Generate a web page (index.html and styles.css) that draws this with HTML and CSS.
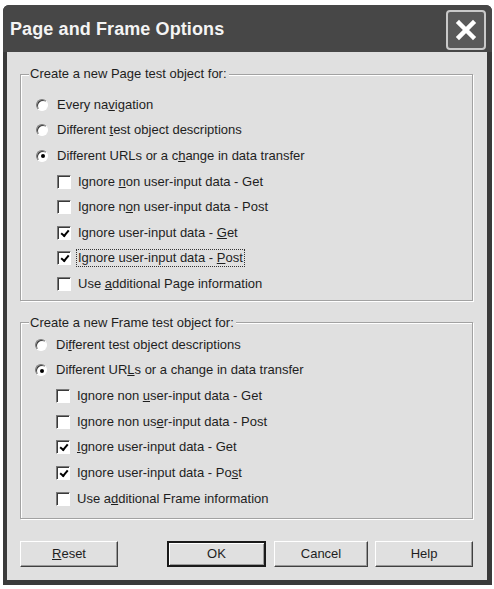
FILE: index.html
```html
<!DOCTYPE html>
<html>
<head>
<meta charset="utf-8">
<link rel="stylesheet" href="styles.css">
</head>
<body>
<div class="window">
  <div class="titlebar">
    <span class="title">Page and Frame Options</span>
    <div class="close">
      <svg width="22" height="22" viewBox="0 0 22 22"><path d="M4 4 L18 18 M18 4 L4 18" stroke="#fff" stroke-width="4.5" stroke-linecap="square"/></svg>
    </div>
  </div>
  <div class="client">
    <fieldset class="group group-page">
      <legend>Create a new Page test object for:</legend>
      <div class="rows">
        <div class="row radio-row"><span class="radio"></span><span class="label">Every na<u>v</u>igation</span></div>
        <div class="row radio-row"><span class="radio"></span><span class="label">Different <u>t</u>est object descriptions</span></div>
        <div class="row radio-row"><span class="radio on"></span><span class="label">Different URLs or a c<u>h</u>ange in data transfer</span></div>
        <div class="row check-row"><span class="check"></span><span class="label">Ignore <u>n</u>on user-input data - Get</span></div>
        <div class="row check-row"><span class="check"></span><span class="label">Ignore n<u>o</u>n user-input data - Post</span></div>
        <div class="row check-row"><span class="check on"></span><span class="label">Ignore user-input data - <u>G</u>et</span></div>
        <div class="row check-row"><span class="check on"></span><span class="label focus">Ignore user-input data - <u>P</u>ost</span></div>
        <div class="row check-row"><span class="check"></span><span class="label">Use <u>a</u>dditional Page information</span></div>
      </div>
    </fieldset>
    <fieldset class="group group-frame">
      <legend>Create a new Frame test object for:</legend>
      <div class="rows">
        <div class="row radio-row"><span class="radio"></span><span class="label">Di<u>f</u>ferent test object descriptions</span></div>
        <div class="row radio-row"><span class="radio on"></span><span class="label">Different UR<u>L</u>s or a change in data transfer</span></div>
        <div class="row check-row"><span class="check"></span><span class="label">Ignore non <u>u</u>ser-input data - Get</span></div>
        <div class="row check-row"><span class="check"></span><span class="label">Ignore non us<u>e</u>r-input data - Post</span></div>
        <div class="row check-row"><span class="check on"></span><span class="label"><u>I</u>gnore user-input data - Get</span></div>
        <div class="row check-row"><span class="check on"></span><span class="label">Ignore user-input data - Po<u>s</u>t</span></div>
        <div class="row check-row"><span class="check"></span><span class="label">Use a<u>d</u>ditional Frame information</span></div>
      </div>
    </fieldset>
    <div class="buttons">
      <div class="btn btn-reset"><u>R</u>eset</div>
      <div class="btn btn-ok">OK</div>
      <div class="btn btn-cancel">Cancel</div>
      <div class="btn btn-help">Help</div>
    </div>
  </div>
</div>
</body>
</html>
```

FILE: styles.css
```css
html, body {
  margin: 0;
  padding: 0;
  background: #ffffff;
}
body {
  font-family: "Liberation Sans", Arial, sans-serif;
  font-size: 13px;
  color: #1e1e1e;
}
.window {
  margin: 5px 0 0 3px;
  width: 489px;
  height: 580px;
  background: #3a3a3a;
  border-radius: 6px 6px 0 0;
  display: flex;
  flex-direction: column;
}
.titlebar {
  height: 47px;
  flex: none;
  display: flex;
  align-items: center;
  justify-content: space-between;
  padding: 0 6px 0 7px;
  background: #474747;
  border-radius: 6px 6px 0 0;
}
.title {
  font-weight: bold;
  font-size: 18px;
  color: #f4f4f4;
  letter-spacing: 0.1px;
  margin-top: 2px;
}
.close {
  width: 36px;
  height: 36px;
  border: 2px solid #c9c9c9;
  border-radius: 4px;
  background: #5a5a5a;
  display: flex;
  align-items: center;
  justify-content: center;
  margin-top: 3px;
}
.client {
  flex: 1;
  margin: 0 5px 5px 4px;
  background: #e0e0e0;
  padding: 14px 13px 0 13px;
}
.group {
  margin: 0;
  padding: 0;
  border: 1px solid #a2a2a2;
  box-shadow: inset 1px 1px 0 #ffffff, 1px 1px 0 #ffffff;
  width: 453px;
  box-sizing: border-box;
}
.group legend {
  margin-left: 8px;
  padding: 0 2px 0 1px;
  line-height: 16px;
  background: #e0e0e0;
}
.group-page .rows {
  padding: 10px 0 3px 0;
}
.group-page .row {
  height: 25.6px;
}
.group-frame {
  margin-top: 14px;
}
.group-frame .rows {
  padding: 1px 0 6px 0;
}
.group-frame .row {
  height: 25.7px;
}
.row {
  display: flex;
  align-items: center;
}
.group-page .radio-row { padding-left: 15px; }
.group-page .check-row { padding-left: 36px; }
.group-frame .radio-row { padding-left: 14px; }
.group-frame .check-row { padding-left: 35px; }
.radio {
  width: 12px;
  height: 12px;
  box-sizing: border-box;
  border-radius: 50%;
  border: 1px solid;
  border-color: #7a7a7a #ffffff #ffffff #7a7a7a;
  box-shadow: inset 1px 1px 0 #3a3a3a;
  background: #ffffff;
  margin-right: 9px;
  display: flex;
  align-items: center;
  justify-content: center;
  flex: none;
}
.radio.on::after {
  content: "";
  width: 4px;
  height: 4px;
  border-radius: 50%;
  background: #000;
  margin: 1px 0 0 1px;
}
.check {
  width: 14px;
  height: 14px;
  box-sizing: border-box;
  border: 1px solid;
  border-color: #7a7a7a #ffffff #ffffff #7a7a7a;
  box-shadow: inset 1px 1px 0 #3a3a3a;
  background: #ffffff;
  margin-right: 7px;
  flex: none;
  display: flex;
  align-items: center;
  justify-content: center;
}
.check.on::after {
  content: "";
  width: 6px;
  height: 3px;
  border-left: 2px solid #000;
  border-bottom: 2px solid #000;
  transform: rotate(-50deg);
  margin: -1px 0 0 1px;
}
.label {
  white-space: nowrap;
  line-height: 16px;
}
.label.focus {
  outline: 1px dotted #333;
  outline-offset: 0;
  margin-left: -1px;
  padding: 0 1px 0 1px;
}
.buttons {
  display: flex;
  margin-top: 22px;
}
.btn {
  height: 26px;
  box-sizing: border-box;
  display: flex;
  align-items: center;
  justify-content: center;
  background: #e0e0e0;
  border: 1px solid;
  border-color: #ffffff #404040 #404040 #ffffff;
  box-shadow: inset -1px -1px 0 #9a9a9a;
}
.btn-reset { width: 98px; }
.btn-ok {
  width: 99px;
  margin-left: 49px;
  border: 2px solid #1a1a1a;
  box-shadow: inset 1px 1px 0 #ffffff, inset -1px -1px 0 #9a9a9a;
}
.btn-cancel { width: 94px; margin-left: 8px; }
.btn-help { width: 98px; margin-left: 7px; }
```
